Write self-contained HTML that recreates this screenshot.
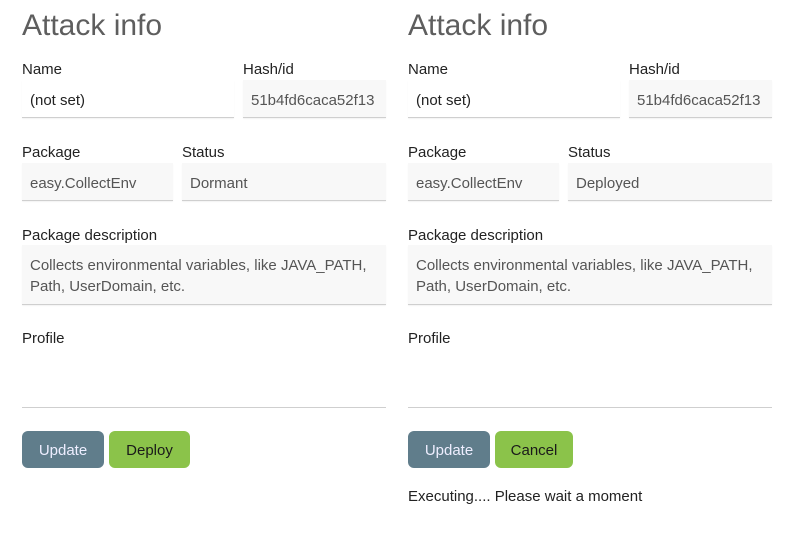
<!DOCTYPE html>
<html><head><style>
body{margin:0;width:800px;height:537px;background:#fff;font-family:"Liberation Sans",sans-serif;position:relative;overflow:hidden}
.a{position:absolute}
h1{position:absolute;margin:0;font-weight:normal;font-size:30px;color:#5e5e5e;top:9px}
.l{position:absolute;font-size:15px;color:#222;line-height:18px;margin-top:1px}
.i{position:absolute;box-sizing:border-box;font-size:15px;color:#555;background:#f8f8f8;border-bottom:1px solid #cfcfcf;padding:2px 8px 0;line-height:37px;height:38px;box-shadow:0 1px 1px rgba(0,0,0,.05)}
.w{background:#fff;color:#222}
.t{line-height:21px;padding-top:10px;height:60px}
.b{position:absolute;top:431px;height:37px;line-height:39px;border-radius:6px;font-size:15px;text-align:center}
.u{background:#607d8b;color:#eef}
.g{background:#8bc34a;color:#1a1a1a}
</style></head><body>
<h1 style="left:22px">Attack info</h1>
<div class="l" style="left:22px;top:60px">Name</div>
<div class="l" style="left:243px;top:60px">Hash/id</div>
<div class="i w" style="left:22px;top:80px;width:212px">(not set)</div>
<div class="i" style="left:243px;top:80px;width:143px">51b4fd6caca52f13</div>
<div class="l" style="left:22px;top:143px">Package</div>
<div class="l" style="left:182px;top:143px">Status</div>
<div class="i" style="left:22px;top:163px;width:151px">easy.CollectEnv</div>
<div class="i" style="left:182px;top:163px;width:204px">Dormant</div>
<div class="l" style="left:22px;top:226px">Package description</div>
<div class="i t" style="left:22px;top:245px;width:364px">Collects environmental variables, like JAVA_PATH, Path, UserDomain, etc.</div>
<div class="l" style="left:22px;top:329px">Profile</div>
<div class="a" style="left:22px;top:407px;width:364px;border-bottom:1px solid #cfcfcf"></div>
<div class="b u" style="left:22px;width:82px">Update</div>
<div class="b g" style="left:109px;width:81px">Deploy</div>

<h1 style="left:408px">Attack info</h1>
<div class="l" style="left:408px;top:60px">Name</div>
<div class="l" style="left:629px;top:60px">Hash/id</div>
<div class="i w" style="left:408px;top:80px;width:212px">(not set)</div>
<div class="i" style="left:629px;top:80px;width:143px">51b4fd6caca52f13</div>
<div class="l" style="left:408px;top:143px">Package</div>
<div class="l" style="left:568px;top:143px">Status</div>
<div class="i" style="left:408px;top:163px;width:151px">easy.CollectEnv</div>
<div class="i" style="left:568px;top:163px;width:204px">Deployed</div>
<div class="l" style="left:408px;top:226px">Package description</div>
<div class="i t" style="left:408px;top:245px;width:364px">Collects environmental variables, like JAVA_PATH, Path, UserDomain, etc.</div>
<div class="l" style="left:408px;top:329px">Profile</div>
<div class="a" style="left:408px;top:407px;width:364px;border-bottom:1px solid #cfcfcf"></div>
<div class="b u" style="left:408px;width:82px">Update</div>
<div class="b g" style="left:495px;width:78px">Cancel</div>
<div class="l" style="left:408px;top:487px">Executing.... Please wait a moment</div>
</body></html>
